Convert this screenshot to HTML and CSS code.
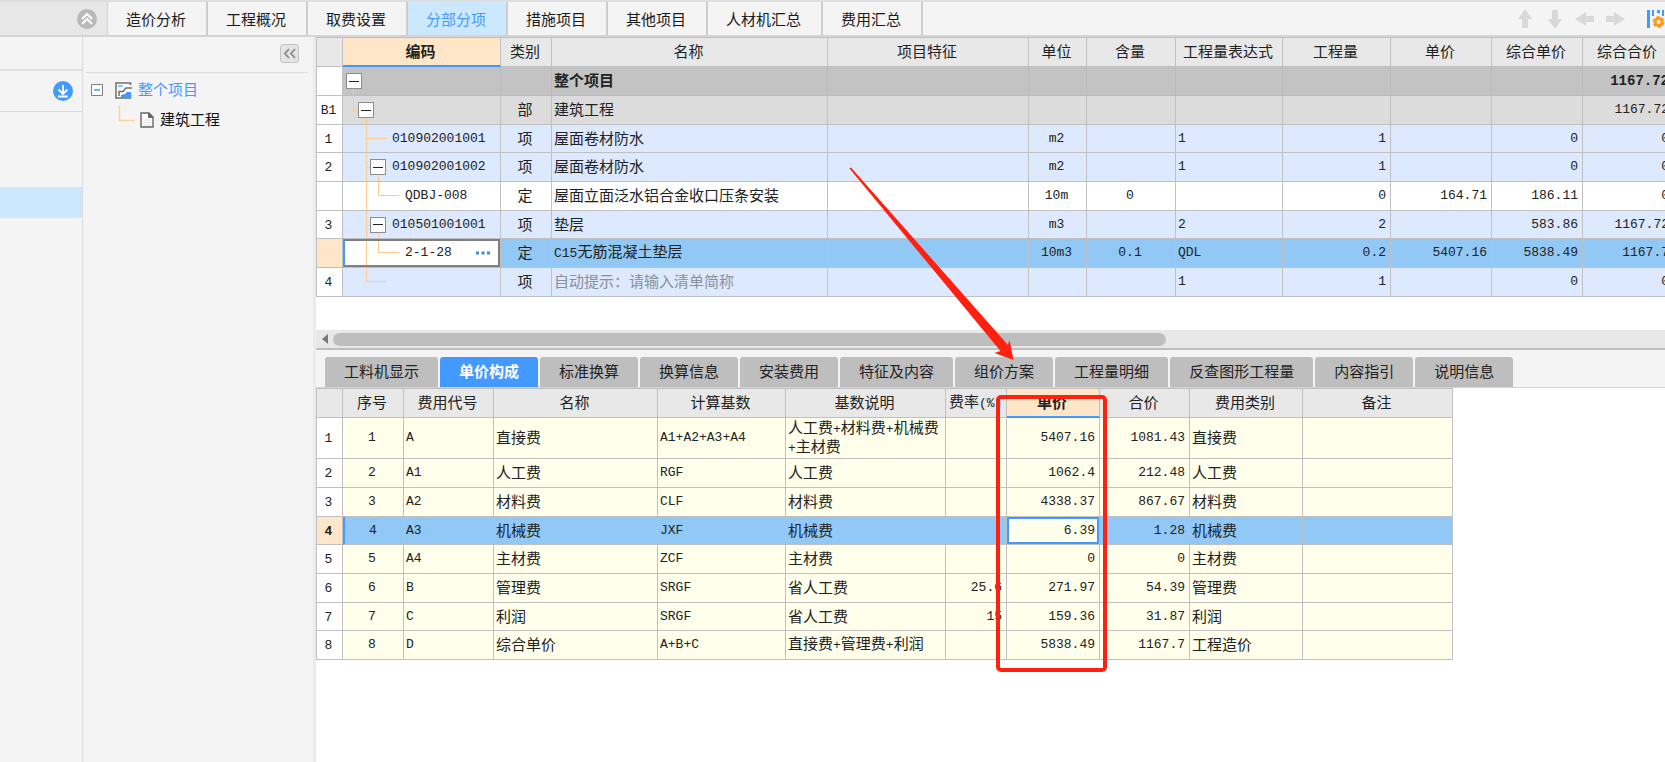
FILE: index.html
```html
<!DOCTYPE html>
<html lang="zh-CN">
<head>
<meta charset="utf-8">
<title>分部分项</title>
<link rel="stylesheet" href="styles.css">
</head>
<body>
<div class="app">
  <header class="topbar">
    <div class="corner">
      <button class="round" type="button" aria-label="收起">
        <svg width="20" height="20" viewBox="0 0 20 20"><circle cx="10" cy="10" r="10" fill="#b8b8b8"/><path d="M5 10l5-5 5 5M5 15l5-5 5 5" fill="none" stroke="#fff" stroke-width="2"/></svg>
      </button>
    </div>
    <nav class="tabs">
      <button type="button">造价分析</button>
      <button type="button">工程概况</button>
      <button type="button">取费设置</button>
      <button type="button" class="on">分部分项</button>
      <button type="button">措施项目</button>
      <button type="button">其他项目</button>
      <button type="button">人材机汇总</button>
      <button type="button">费用汇总</button>
    </nav>
    <div class="tools">
      <button type="button" aria-label="上移"><svg width="20" height="20" viewBox="0 0 20 20"><path d="M10 0l7 10h-4v9H7v-9H3z"/></svg></button>
      <button type="button" aria-label="下移"><svg width="20" height="20" viewBox="0 0 20 20"><path d="M10 20l7-10h-4V1H7v9H3z"/></svg></button>
      <button type="button" aria-label="左移"><svg width="20" height="20" viewBox="0 0 20 20"><path d="M0 10l11-7v4h8v6h-8v4z"/></svg></button>
      <button type="button" aria-label="右移"><svg width="20" height="20" viewBox="0 0 20 20"><path d="M20 10L9 3v4H1v6h8v4z"/></svg></button>
      <button type="button" class="setcol" aria-label="列设置"><svg width="19" height="20" viewBox="0 0 19 20"><path d="M1 1h3v18H1zM6 1h2v6H6zM11 1h3v3h-3zM16 1h2v6h-2z" fill="#49f"/><circle cx="12.500" cy="13" r="3.500" fill="none" stroke="#ff9c1a" stroke-width="3"/><circle cx="12.500" cy="13" r="5" fill="none" stroke="#ff9c1a" stroke-width="2" stroke-dasharray="3 2.236"/></svg></button>
    </div>
  </header>

  <div class="body">
    <aside class="rail">
      <div class="rail-head"></div>
      <div class="rail-import">
        <button class="round" type="button" aria-label="导入">
          <svg width="20" height="20" viewBox="0 0 20 20"><circle cx="10" cy="10" r="10" fill="#49f"/><path d="M10 4v9M5.500 8.500L10 13l4.500-4.500M5 15.500h10" fill="none" stroke="#fff" stroke-width="1.800"/></svg>
        </button>
      </div>
      <div class="rail-item"></div>
    </aside>

    <aside class="project">
      <div class="project-head">
        <button class="fold" type="button" aria-label="折叠"><svg width="17" height="17" viewBox="0 0 17 17"><path d="M8 4L4 8.500 8 13M14 4l-4 4.500 4 4.500" fill="none" stroke="#8a8a8a" stroke-width="1.800"/></svg></button>
      </div>
      <ul class="ptree">
        <li class="root">
          <button class="mini" type="button" aria-label="折叠"><svg width="12" height="12" viewBox="0 0 12 12"><path d="M.5.5h11v11H.5z" fill="#fff" stroke="#808080"/><path d="M3 6h6" stroke="#49f" stroke-width="1.500"/></svg></button>
          <svg width="17" height="17" viewBox="0 0 17 17"><path d="M15.500 3V1H1v15h14.500v-4" fill="#fff" stroke="#6e6e6e" stroke-width="1.500"/><path d="M3 4h5" stroke="#7cc4ff" stroke-width="2"/><path d="M4 14V9.500h4L11 6h6" fill="none" stroke="#6e6e6e" stroke-width="1.500"/><path d="M6 16v-3l4-1 2-2h4v6z" fill="#49f"/></svg>
          <span>整个项目</span>
        </li>
        <li class="leaf">
          <svg class="elbow" width="18" height="29" viewBox="0 0 18 29"><path d="M1.500 0v14.500H17" fill="none" stroke="#ffd199" stroke-width="1.500"/></svg>
          <svg width="14" height="16" viewBox="0 0 14 16"><path d="M1 1h8l4 4v10H1z" fill="#fff" stroke="#666" stroke-width="1.400"/><path d="M8.500 1v4.500H13z" fill="#666" stroke="#666"/><path d="M3 8h8M3 10.500h8M3 13h8" stroke="#ddd"/></svg>
          <span>建筑工程</span>
        </li>
      </ul>
    </aside>

    <main class="main">
      <section class="upper">
        <table class="grid bill">
          <colgroup><col class="w26"><col class="w158"><col class="w51"><col class="w276"><col class="w201"><col class="w58"><col class="w89"><col class="w107"><col class="w108"><col class="w101"><col class="w91"><col class="w91"></colgroup>
          <thead><tr><th></th><th class="sel">编码</th><th>类别</th><th>名称</th><th>项目特征</th><th>单位</th><th>含量</th><th>工程量表达式</th><th>工程量</th><th>单价</th><th>综合单价</th><th>综合合价</th></tr></thead>
          <tbody>
            <tr class="total"><th></th><td class="code"><svg class="guide" width="60" height="29"><path d="M10.500 14v15"/></svg><div class="node l0"><button class="tog" type="button" aria-label="折叠"></button></div></td><td></td><td>整个项目</td><td></td><td></td><td></td><td></td><td></td><td></td><td></td><td class="n">1167.72</td></tr>
            <tr class="part"><th>B1</th><td class="code"><svg class="guide" width="60" height="29"><path d="M10.500 0v14.500H23M23.500 14v15"/></svg><div class="node l1"><button class="tog" type="button" aria-label="折叠"></button></div></td><td class="c">部</td><td>建筑工程</td><td></td><td></td><td></td><td></td><td></td><td></td><td></td><td class="n">1167.72</td></tr>
            <tr><th>1</th><td class="code"><svg class="guide" width="60" height="29"><path d="M23.500 0v29M23 13.500h21"/></svg><div class="node leaf2">010902001001</div></td><td class="c">项</td><td>屋面卷材防水</td><td></td><td class="m">m2</td><td></td><td class="t">1</td><td class="n">1</td><td></td><td class="n">0</td><td class="n">0</td></tr>
            <tr><th>2</th><td class="code"><svg class="guide" width="60" height="29"><path d="M23.500 0v29M23 14.500h12M35.500 14v15"/></svg><div class="node l2"><button class="tog" type="button" aria-label="折叠"></button>010902001002</div></td><td class="c">项</td><td>屋面卷材防水</td><td></td><td class="m">m2</td><td></td><td class="t">1</td><td class="n">1</td><td></td><td class="n">0</td><td class="n">0</td></tr>
            <tr class="white"><th></th><td class="code"><svg class="guide" width="60" height="29"><path d="M23.500 0v29M35.500 0v13.500H56"/></svg><div class="node leaf3">QDBJ-008</div></td><td class="c">定</td><td>屋面立面泛水铝合金收口压条安装</td><td></td><td class="m">10m</td><td class="m">0</td><td></td><td class="n">0</td><td class="n">164.71</td><td class="n">186.11</td><td class="n">0</td></tr>
            <tr><th>3</th><td class="code"><svg class="guide" width="60" height="29"><path d="M23.500 0v29M23 14.500h12M35.500 14v15"/></svg><div class="node l2"><button class="tog" type="button" aria-label="折叠"></button>010501001001</div></td><td class="c">项</td><td>垫层</td><td></td><td class="m">m3</td><td></td><td class="t">2</td><td class="n">2</td><td></td><td class="n">583.86</td><td class="n">1167.72</td></tr>
            <tr class="cur"><th class="sel"></th><td class="code edit"><svg class="guide" width="60" height="29"><path d="M23.500 0v29M35.500 0v13.500H56"/></svg><div class="node leaf3"><input class="field" type="text" value="2-1-28" aria-label="编码"><button class="more" type="button" aria-label="选择"><svg width="14" height="4" viewBox="0 0 14 4"><path d="M0 .5h3v3H0zM5.500.5h3v3h-3zM11 .5h3v3h-3z" fill="#3d8fd6"/></svg></button></div></td><td class="c">定</td><td><span class="mono">C15</span>无筋混凝土垫层</td><td></td><td class="m">10m3</td><td class="m">0.1</td><td class="t">QDL</td><td class="n">0.2</td><td class="n">5407.16</td><td class="n">5838.49</td><td class="n">1167.7</td></tr>
            <tr><th>4</th><td class="code"><svg class="guide" width="60" height="29"><path d="M23.500 0v13.500H44"/></svg></td><td class="c">项</td><td class="hint">自动提示：请输入清单简称</td><td></td><td></td><td></td><td class="t">1</td><td class="n">1</td><td></td><td class="n">0</td><td class="n">0</td></tr>
          </tbody>
        </table>
      </section>
      <div class="hscroll">
        <svg width="6" height="10" viewBox="0 0 6 10"><path d="M6 0v10L0 5z" fill="#7a7a7a"/></svg>
        <div class="track"><div class="thumb"></div></div>
      </div>

      <nav class="subtabs">
        <button type="button">工料机显示</button>
        <button type="button" class="on">单价构成</button>
        <button type="button">标准换算</button>
        <button type="button">换算信息</button>
        <button type="button">安装费用</button>
        <button type="button">特征及内容</button>
        <button type="button">组价方案</button>
        <button type="button">工程量明细</button>
        <button type="button">反查图形工程量</button>
        <button type="button">内容指引</button>
        <button type="button">说明信息</button>
      </nav>
      <section class="lower">
        <table class="grid price">
          <colgroup><col class="w26"><col class="w61"><col class="w90"><col class="w164"><col class="w128"><col class="w160"><col class="w61"><col class="w93"><col class="w90"><col class="w113"><col class="w150"></colgroup>
          <thead><tr><th></th><th>序号</th><th>费用代号</th><th>名称</th><th>计算基数</th><th>基数说明</th><th class="rate">费率<span class="mono">(%)</span></th><th class="sel">单价</th><th>合价</th><th>费用类别</th><th>备注</th></tr></thead>
          <tbody>
            <tr><th>1</th><td class="m">1</td><td class="t">A</td><td>直接费</td><td class="t">A1+A2+A3+A4</td><td class="wrap">人工费<span class="mono">+</span>材料费<span class="mono">+</span>机械费<br><span class="mono">+</span>主材费</td><td></td><td class="n">5407.16</td><td class="n">1081.43</td><td>直接费</td><td></td></tr>
            <tr><th>2</th><td class="m">2</td><td class="t">A1</td><td>人工费</td><td class="t">RGF</td><td>人工费</td><td></td><td class="n">1062.4</td><td class="n">212.48</td><td>人工费</td><td></td></tr>
            <tr><th>3</th><td class="m">3</td><td class="t">A2</td><td>材料费</td><td class="t">CLF</td><td>材料费</td><td></td><td class="n">4338.37</td><td class="n">867.67</td><td>材料费</td><td></td></tr>
            <tr class="cur"><th class="sel">4</th><td class="m first">4</td><td class="t">A3</td><td>机械费</td><td class="t">JXF</td><td>机械费</td><td></td><td class="n focus"><input class="field" type="text" value="6.39" aria-label="单价"></td><td class="n">1.28</td><td>机械费</td><td></td></tr>
            <tr><th>5</th><td class="m">5</td><td class="t">A4</td><td>主材费</td><td class="t">ZCF</td><td>主材费</td><td></td><td class="n">0</td><td class="n">0</td><td>主材费</td><td></td></tr>
            <tr><th>6</th><td class="m">6</td><td class="t">B</td><td>管理费</td><td class="t">SRGF</td><td>省人工费</td><td class="n">25.6</td><td class="n">271.97</td><td class="n">54.39</td><td>管理费</td><td></td></tr>
            <tr><th>7</th><td class="m">7</td><td class="t">C</td><td>利润</td><td class="t">SRGF</td><td>省人工费</td><td class="n">15</td><td class="n">159.36</td><td class="n">31.87</td><td>利润</td><td></td></tr>
            <tr><th>8</th><td class="m">8</td><td class="t">D</td><td>综合单价</td><td class="t">A+B+C</td><td>直接费<span class="mono">+</span>管理费<span class="mono">+</span>利润</td><td></td><td class="n">5838.49</td><td class="n">1167.7</td><td>工程造价</td><td></td></tr>
          </tbody>
        </table>
      </section>
      <svg class="marks" width="800" height="700" viewBox="316 37 800 700"><path d="M849.500 168.500l1.500-1L1008 345l1.500-5 4 20-19-7 6-2z" fill="#ff2010"/><rect x="998" y="397" width="107" height="273" rx="3" fill="none" stroke="#ff2010" stroke-width="4"/></svg>
    </main>
  </div>
</div>
</body>
</html>
```
FILE: styles.css
```css
* { box-sizing: border-box; }
body {
  margin: 0;
  background: #f4f4f4;
  color: #222;
  font: 15px/18px "Liberation Sans", "Noto Sans CJK SC", sans-serif;
}
button { margin: 0; padding: 0; border: 0; background: none; color: inherit; font: inherit; }
svg { display: block; flex: none; }
.app { display: flex; flex-direction: column; height: 100vh; overflow: hidden; }

.topbar { display: flex; flex: none; height: 37px; border-top: 2px solid #dedede; border-bottom: 2px solid #d4d4d4; }
.corner { display: flex; align-items: center; justify-content: flex-end; width: 108px; padding-right: 10px; background: #e7e7e7; border-right: 1px solid #d4d4d4; }
.tabs { display: flex; }
.tabs button { padding: 2px 20px 0 18px; border-right: 2px solid #cdcdcd; white-space: nowrap; color: #1a1a1a; }
.tabs .on { background: #cce8ff; color: #49f; }
.tools { display: flex; align-items: center; gap: 10px; margin-left: auto; fill: #d9d9d9; }
.tools .setcol { margin-left: 11px; }

.body { display: flex; flex: 1; min-height: 0; }
.rail { flex: none; width: 83px; border-right: 1px solid #dadada; }
.rail-head { height: 34px; border-bottom: 2px solid #dedede; }
.rail-import { display: flex; align-items: center; justify-content: flex-end; height: 41px; padding-right: 9px; border-bottom: 1px solid #dadada; }
.rail-item { height: 31px; margin-top: 75px; background: #cce8ff; }

.project { flex: none; width: 233px; padding: 0 5px 0 3px; border-right: 3px solid #ebebeb; }
.project-head { display: flex; align-items: center; justify-content: flex-end; height: 36px; padding: 0 9px 2px 0; border-bottom: 1px solid #dedede; }
.fold { border: 1px solid #c4c4c4; border-radius: 3px; background: #e4e4e4; }
.ptree { margin: 0; padding: 2px 0 0; list-style: none; }
.ptree li { display: flex; align-items: center; height: 30px; }
.root { padding-left: 5px; color: #49f; }
.root .mini { margin-right: 12px; }
.root span { margin-left: 6px; }
.leaf { padding-left: 32px; color: #111; }
.leaf .elbow { margin-right: 4px; }
.leaf span { margin-left: 6px; }

.main { position: relative; display: flex; flex: 1; flex-direction: column; min-width: 0; overflow: hidden; background: #fff; }
.upper { flex: none; height: 293px; overflow: hidden; }

.grid { table-layout: fixed; width: 0; border-collapse: separate; border-spacing: 0; border-top: 1px solid #c0c0c0; border-left: 1px solid #c0c0c0; }
.grid th, .grid td { position: relative; height: 29px; padding: 0 4px 0 2px; border-right: 1px solid #c0c0c0; border-bottom: 1px solid #c0c0c0; font-weight: 400; white-space: nowrap; overflow: hidden; text-align: left; }
.grid thead th { background: #e8e8e8; text-align: center; }
.grid thead .sel { border-bottom: 2px solid #49f; background: #ffe6c8; font-weight: 700; }
.grid tbody th { padding: 2px 2px 0 0; background: #fff; text-align: center; }
.grid tbody th, .grid .n, .grid .m, .grid .t, .grid .code, .mono { font-family: "Liberation Mono", "Noto Sans CJK SC", monospace; font-size: 13px; }
.grid .c, .grid .m { text-align: center; }
.grid .n { text-align: right; }
.grid .cur td { background: #91c8f6; }
.grid tbody .sel { background: #ffe6c8; font-weight: 700; }

.bill td { background: #dce9fe; }
.bill tbody tr:nth-child(3n) > * { height: 28px; }
.bill .total td { background: #c3c3c3; border-color: #bcbcbc; font-weight: 700; }
.bill .total .n { font-size: 14px; }
.bill .part td { background: #dcdcdc; }
.bill .white td { background: #fff; }
.bill .hint { color: #8a8f99; }
.grid .code { padding: 0; }
.guide { position: absolute; top: 0; left: 0; fill: none; stroke: #ffcb8c; }
.node { position: relative; display: flex; align-items: center; gap: 6px; }
.l0 { padding-left: 3px; }
.l1 { padding-left: 15px; }
.l2 { padding-left: 27px; }
.leaf2 { padding-left: 49px; }
.leaf3 { padding-left: 62px; }
.tog { display: flex; align-items: center; justify-content: center; width: 16px; height: 16px; border: 1px solid #8c8c8c; background: #fff; }
.tog::before { content: ""; width: 10px; height: 1px; background: #222; }
.grid .cur .edit { background: #fff; }
.edit::after { content: ""; position: absolute; inset: 0; border: 2px solid #7f7f7f; border-left-color: #49f; pointer-events: none; }
.field { flex: 1; width: 100%; min-width: 0; margin: 0; padding: 0; border: 0; background: none; color: inherit; font: inherit; text-align: inherit; outline: 0; }
.more { margin-right: 10px; }

.hscroll { display: flex; flex: none; align-items: center; gap: 5px; height: 20px; padding: 0 0 0 6px; background: #e8e8e8; border-bottom: 2px solid #bebebe; }
.track { flex: 1; }
.thumb { width: 62.5%; height: 13px; border-radius: 7px; background: #bebebe; }

.subtabs { display: flex; flex: none; gap: 2px; height: 37px; padding: 7px 0 0 9px; background: #f4f4f4; }
.subtabs button { padding: 0 19px; border-radius: 3px 3px 0 0; background: #bebebe; white-space: nowrap; }
.subtabs .on { background: #49f; color: #fff; font-weight: 700; }

.lower { flex: 1; min-height: 0; overflow: hidden; border-top: 1px solid #d4d4d4; }
.price td { background: #ffffeb; }
.price tbody tr:nth-child(3n + 1) > * { height: 28px; }
.price tbody tr:first-child > * { height: 41px; }
.price .wrap { line-height: 17px; }
.price .first { border-left: 2px solid #49f; }
.price .rate { padding: 0 0 0 3px; text-align: left; }
.grid .cur .focus { background: #ffffeb; box-shadow: inset 0 0 0 2px #49f; }

.marks { position: absolute; top: 0; left: 0; pointer-events: none; }

.w26 { width: 26px; }
.w51 { width: 51px; }
.w58 { width: 58px; }
.w61 { width: 61px; }
.w89 { width: 89px; }
.w90 { width: 90px; }
.w91 { width: 91px; }
.w93 { width: 93px; }
.w101 { width: 101px; }
.w107 { width: 107px; }
.w108 { width: 108px; }
.w113 { width: 113px; }
.w128 { width: 128px; }
.w150 { width: 150px; }
.w158 { width: 158px; }
.w160 { width: 160px; }
.w164 { width: 164px; }
.w201 { width: 201px; }
.w276 { width: 276px; }
```
